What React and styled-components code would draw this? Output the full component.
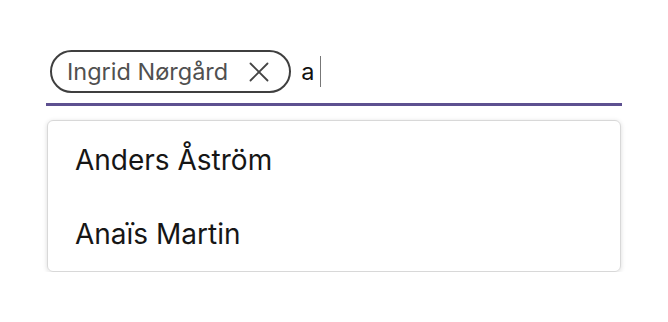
import React from 'react'
import styled, { createGlobalStyle } from 'styled-components'

const Global = createGlobalStyle`
  body {
    margin: 0;
    background: #fff;
    font-family: Inter, "Noto Sans", sans-serif;
    -webkit-font-smoothing: antialiased;
  }
`

const Wrap = styled.div`
  width: 576px;
  padding: 50px 46px 0;
`

const Field = styled.div`
  display: flex;
  align-items: center;
  gap: 10px;
  padding: 0 0 10px 4px;
  border-bottom: 3px solid #5d5090;
`

const Chip = styled.div`
  display: flex;
  align-items: center;
  gap: 20px;
  height: 39px;
  padding: 0 19px 0 15px;
  border: 2px solid #3f3f3f;
  border-radius: 22px;
  font-size: 23.5px;
  color: #505050;
`

const Remove = styled.button`
  display: flex;
  align-items: center;
  justify-content: center;
  width: 22px;
  height: 22px;
  padding: 0;
  border: 0;
  background: none;
  color: #444;
`

const Typed = styled.div`
  display: flex;
  align-items: center;
  gap: 6px;
  font-size: 23.5px;
  color: #111;
`

const Caret = styled.span`
  width: 1px;
  height: 31px;
  background: #777;
`

const Menu = styled.ul`
  list-style: none;
  margin: 14px 1px 0;
  padding: 2px 0 0;
  border: 1px solid #d8d8d8;
  border-radius: 6px;
  box-shadow: 0 1px 5px rgba(0, 0, 0, 0.14);
`

const Option = styled.li`
  display: flex;
  align-items: center;
  height: 74px;
  padding-left: 27px;
  font-size: 28px;
  color: #161616;
`

export default function App() {
  return (
    <Wrap>
      <Global />
      <Field>
        <Chip>
          Ingrid Nørgård
          <Remove aria-label="Remove">
            <svg width="20" height="20" viewBox="0 0 20 20" fill="none" stroke="currentColor" strokeWidth="1.8" strokeLinecap="round">
              <path d="M1.5 1.5L18.5 18.5M18.5 1.5L1.5 18.5" />
            </svg>
          </Remove>
        </Chip>
        <Typed>
          a
          <Caret />
        </Typed>
      </Field>
      <Menu>
        <Option>Anders Åström</Option>
        <Option>Anaïs Martin</Option>
      </Menu>
    </Wrap>
  )
}
